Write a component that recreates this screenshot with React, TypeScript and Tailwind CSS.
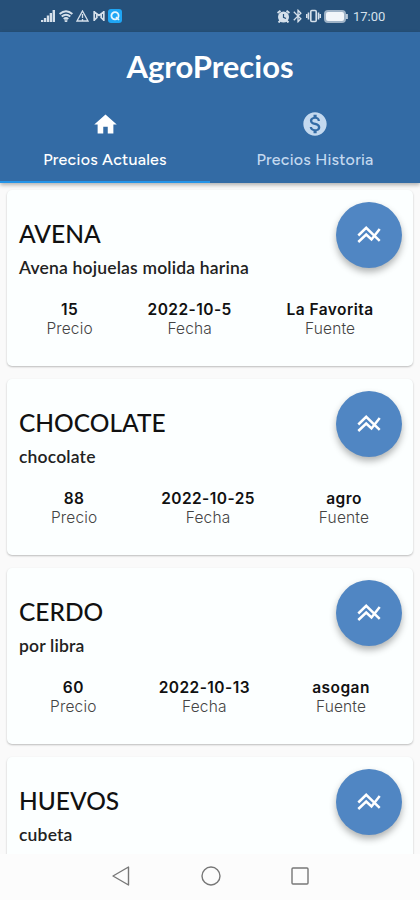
import { MdBluetooth, MdHome, MdMonetizationOn } from 'react-icons/md'

type Product = {
  name: string
  description: string
  stats?: { price: string; date: string; source: string }
}

const products: Product[] = [
  {
    name: 'AVENA',
    description: 'Avena hojuelas molida harina',
    stats: { price: '15', date: '2022-10-5', source: 'La Favorita' },
  },
  {
    name: 'CHOCOLATE',
    description: 'chocolate',
    stats: { price: '88', date: '2022-10-25', source: 'agro' },
  },
  {
    name: 'CERDO',
    description: 'por libra',
    stats: { price: '60', date: '2022-10-13', source: 'asogan' },
  },
  { name: 'HUEVOS', description: 'cubeta' },
]

function StatusBar() {
  return (
    <div className="flex h-8 items-center bg-[#265079] pr-[34px] pl-[41px] text-[#d5e0eb]">
      <svg width="14" height="12" viewBox="0 0 14 12" fill="currentColor">
        <path d="M0 10h2.300v2H0zM2.900 8h2.300v4H2.900zM5.800 5.500h2.300V12H5.800zM8.700 3H11v9H8.700zM11.600 0H14v12h-2.400z" />
      </svg>
      <svg className="ml-1" width="14" height="12" viewBox="0 0 14 12" fill="none" stroke="currentColor" strokeWidth="1.900">
        <path d="M.6 4q6.400-5.600 12.800 0M2.700 6.600q4.300-3.600 8.600 0M4.700 9q2.300-1.900 4.600 0" />
        <circle cx="7" cy="10.800" r=".5" />
      </svg>
      <svg className="ml-[3px]" width="13" height="12" viewBox="0 0 13 12" fill="none" stroke="currentColor" strokeWidth="1.300">
        <path d="M6.500 1 12 11H1zM6.500 4v4M6.500 9v1.200" />
      </svg>
      <svg className="ml-[4px]" width="12" height="12" viewBox="0 0 12 12" fill="none" stroke="currentColor" strokeWidth="1.700">
        <path d="M1.200 1v10M10.800 1v10M1.200 1.800 6 5.500l4.800-3.700M1.200 10.200 4.500 7M10.800 10.200 7.500 7M3.800 4v4M8.200 4v4" />
      </svg>
      <svg className="ml-[3px]" width="14" height="14" viewBox="0 0 14 14">
        <rect width="14" height="14" rx="3" fill="#1fa6f5" />
        <circle cx="7" cy="6.800" r="3.600" fill="none" stroke="#e5f5ff" strokeWidth="1.800" />
        <path d="m8 8 3 3" stroke="#e5f5ff" strokeWidth="1.600" />
      </svg>
      <svg className="ml-auto" width="13" height="13" viewBox="0 0 13 13" fill="none">
        <circle cx="6.500" cy="7" r="5.500" fill="currentColor" />
        <path d="M.5 3 3.500.7M12.500 3 9.500.7M1.500 12.500l2-2M11.500 12.500l-2-2" stroke="currentColor" strokeWidth="1.900" />
        <path d="M6.500 4v3.300L9 8.500" stroke="#265079" strokeWidth="1.200" />
      </svg>
      <MdBluetooth size={16} />
      <svg width="15" height="14" viewBox="0 0 15 14" fill="none" stroke="currentColor" strokeWidth="1.600">
        <rect x="4.800" y="1.500" width="5.400" height="11" rx="1" />
        <path d="M2.500 3.500v7M12.500 3.500v7M.6 5v4M14.400 5v4" />
      </svg>
      <svg className="ml-[3px]" width="24" height="13" viewBox="0 0 24 13">
        <rect x="1" y="1" width="20" height="11" rx="3" fill="#f2f6fa" stroke="#9fb3c7" strokeWidth="2" />
        <path d="M22.900 4v5" stroke="#b9c9d9" strokeWidth="2" />
      </svg>
      <span className="ml-[5px] w-[33px] font-['Roboto'] text-[13px] leading-none whitespace-nowrap">17:00</span>
    </div>
  )
}

function Header() {
  return (
    <header className="relative z-10 h-[151px] bg-[#336ba5] shadow-[0_2px_4px_rgba(0,0,0,0.3)]">
      <h1 className="h-[68px] pt-[13px] text-center font-['Lato'] text-[31px] leading-[42px] font-bold text-white">
        AgroPrecios
      </h1>
      <div className="grid h-[83px] grid-cols-2 font-['Figtree','Open_Sans',sans-serif] text-base font-medium">
        <div className="flex flex-col items-center border-b-2 border-[#2494e8] pt-[11px] text-white">
          <MdHome size={27} />
          <span className="mt-[12px] leading-5 tracking-[0.25px]">Precios Actuales</span>
        </div>
        <div className="flex flex-col items-center pt-[10px] text-[#c4d9ef]">
          <MdMonetizationOn size={28} />
          <span className="mt-[12px] leading-5 tracking-[0.25px]">Precios Historia</span>
        </div>
      </div>
    </header>
  )
}

function Stat({ value, label }: { value: string; label: string }) {
  return (
    <div className="flex flex-col items-center font-['Inter',sans-serif]">
      <span className="text-[15.500px] leading-[19px] font-semibold tracking-[0.45px] text-[#111]">{value}</span>
      <span className="text-[15.500px] leading-[19px] font-light tracking-[0.15px] text-[#444]">{label}</span>
    </div>
  )
}

function ProductCard({ product }: { product: Product }) {
  const { name, description, stats } = product

  return (
    <article className="relative h-[176px] shrink-0 rounded-[5px] bg-[#fcffff] pt-7 shadow-[0_1px_2px_rgba(0,0,0,0.25)]">
      <h2 className="pl-3 font-['Lato'] text-[24.500px] leading-8 font-medium text-[#111]">{name}</h2>
      <p className="mt-[6px] pl-3 font-['Lato'] text-[17.500px] leading-6 font-semibold tracking-[0.18px] text-[#222]">
        {description}
      </p>
      <button
        type="button"
        aria-label="Ver historial"
        className="absolute top-[12px] right-[11px] flex size-[66px] items-center justify-center rounded-full bg-[#5086c3] text-white shadow-[0_4px_7px_rgba(0,0,0,0.3)]"
      >
        <svg width="24" height="24" viewBox="0 0 24 24" fill="none" stroke="currentColor" strokeWidth="2.500">
          <path d="M1.300 12.500 9.200 4.800l13.500 13M1.300 19l7.900-7.500 5.300 5L22.700 6" />
        </svg>
      </button>
      {stats ? (
        <div className="mt-[20px] flex justify-around px-3">
          <Stat value={stats.price} label="Precio" />
          <Stat value={stats.date} label="Fecha" />
          <Stat value={stats.source} label="Fuente" />
        </div>
      ) : null}
    </article>
  )
}

function NavigationBar() {
  return (
    <nav className="flex h-[46px] shrink-0 items-center justify-center gap-[70px] bg-[#fcfcfc] pr-px pb-0.5 text-[#777]">
      <svg width="20" height="20" viewBox="0 0 20 20" fill="none" stroke="currentColor" strokeWidth="1.400">
        <path d="M17.500 1v18L2 10z" strokeLinejoin="round" />
      </svg>
      <svg width="20" height="20" viewBox="0 0 20 20" fill="none" stroke="currentColor" strokeWidth="1.400">
        <circle cx="10" cy="10" r="9" />
      </svg>
      <svg width="18" height="18" viewBox="0 0 18 18" fill="none" stroke="currentColor" strokeWidth="1.400">
        <rect x="1" y="1" width="16" height="16" rx="1" />
      </svg>
    </nav>
  )
}

export default function App() {
  return (
    <div className="flex h-[900px] w-[420px] flex-col overflow-hidden bg-[#fafafa]">
      <StatusBar />
      <Header />
      <main className="flex min-h-0 flex-1 flex-col gap-[13px] overflow-hidden px-[7px] pt-[7px]">
        {products.map((product) => (
          <ProductCard key={product.name} product={product} />
        ))}
      </main>
      <NavigationBar />
    </div>
  )
}
